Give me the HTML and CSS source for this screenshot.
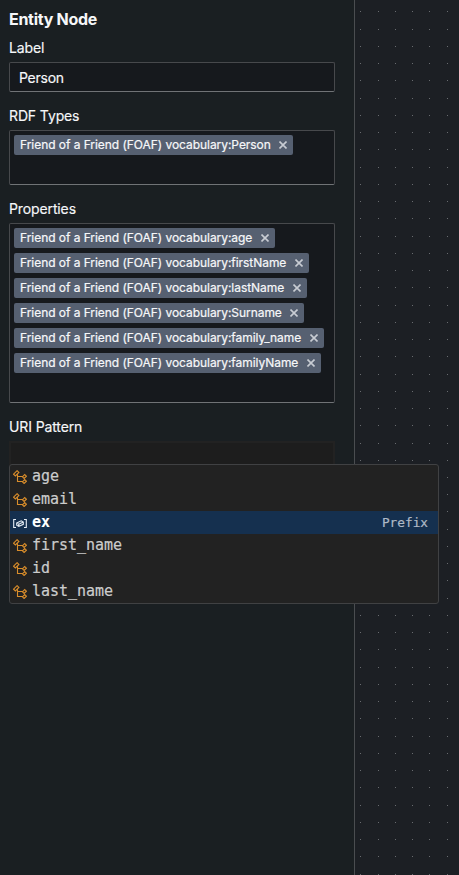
FILE: index.html
```html
<!DOCTYPE html>
<html lang="en">
<head>
<meta charset="utf-8">
<title>Entity Node</title>
<link rel="stylesheet" href="styles.css">
</head>
<body>
<svg class="defs" aria-hidden="true">
  <symbol id="tree" viewBox="0 0 14 14">
    <path d="M.6 4.2 4.1.7 5.9 2.5 2.4 6Z M4.5 4.4V11.5H9.6 M4.5 6.5H9.6 M9.4 6.8 11.7 4.5 13.4 6.2 11.1 8.5Z M9.4 11.8 11.7 9.5 13.4 11.2 11.1 13.5Z" />
  </symbol>
  <symbol id="variable" viewBox="0 0 14 14">
    <path d="M3 3.5H.7V11.5H3 M11 3.5H13.3V11.5H11 M3.7 7 8.2 4.8 10.3 6V8.3L5.8 10.5 3.7 9.3Z M3.7 7 5.8 8.2 10.3 6 M5.8 8.2V10.5" />
  </symbol>
  <symbol id="close" viewBox="0 0 8 8"><path d="M.5.5 7.5 7.5M7.5.5.5 7.5" /></symbol>
</svg>
<div class="app">
  <aside class="panel">
    <h1 class="title">Entity Node</h1>
    <label class="label label-first">Label</label>
    <div class="field text-field">Person</div>
    <label class="label">RDF Types</label>
    <div class="field tags types">
      <span class="tag">Friend of a Friend (FOAF) vocabulary:Person<svg><use href="#close"/></svg></span>
    </div>
    <label class="label">Properties</label>
    <div class="field tags properties">
      <span class="tag">Friend of a Friend (FOAF) vocabulary:age<svg><use href="#close"/></svg></span>
      <span class="tag">Friend of a Friend (FOAF) vocabulary:firstName<svg><use href="#close"/></svg></span>
      <span class="tag">Friend of a Friend (FOAF) vocabulary:lastName<svg><use href="#close"/></svg></span>
      <span class="tag">Friend of a Friend (FOAF) vocabulary:Surname<svg><use href="#close"/></svg></span>
      <span class="tag">Friend of a Friend (FOAF) vocabulary:family_name<svg><use href="#close"/></svg></span>
      <span class="tag">Friend of a Friend (FOAF) vocabulary:familyName<svg><use href="#close"/></svg></span>
    </div>
    <label class="label">URI Pattern</label>
    <div class="editor">
      <ul class="menu">
        <li class="option"><svg><use href="#tree"/></svg><span>age</span></li>
        <li class="option"><svg><use href="#tree"/></svg><span>email</span></li>
        <li class="option selected"><svg><use href="#variable"/></svg><span>ex</span><small>Prefix</small></li>
        <li class="option"><svg><use href="#tree"/></svg><span>first_name</span></li>
        <li class="option"><svg><use href="#tree"/></svg><span>id</span></li>
        <li class="option"><svg><use href="#tree"/></svg><span>last_name</span></li>
      </ul>
    </div>
  </aside>
  <main class="canvas"><svg class="dots"><path id="dots" /></svg></main>
</div>
<script src="dots.js"></script>
</body>
</html>
```

FILE: dots.js
```js
const pitch = 17.241;
let d = "";
for (let row = 0; row < 51; row++) {
  for (let col = 0; col < 6; col++) {
    const x = Math.round(5.49 + col * pitch);
    const y = Math.round(11.49 + row * pitch);
    d += `M${x} ${y}h1v1h-1z`;
  }
}
document.getElementById("dots").setAttribute("d", d);
```

FILE: styles.css
```css
* { box-sizing: border-box; }
body {
  margin: 0;
  background: #1c1f24;
  color: #f6f7f9;
  font: 14px/18px Inter, "Liberation Sans", sans-serif;
}
.defs { display: none; }
.app { display: flex; height: 875px; overflow: hidden; }
.panel {
  flex: 0 0 355px;
  padding: 9px 19px 0 9px;
  border-right: 1px solid #4a4d50;
  background: #1a1f22;
}
.title { margin: 0; font-size: 16px; line-height: 20px; font-weight: 700; letter-spacing: -.28px; }
.label { display: block; margin: 15px 0 5px; letter-spacing: -.12px; -webkit-text-stroke: .15px; }
.title + .label-first { margin-top: 10px; }
.field {
  border: 1px solid #47494c;
  border-bottom-color: #707376;
  border-radius: 2px;
  background: #16191d;
}
.text-field { height: 30px; padding: 0 9px; line-height: 29px; letter-spacing: -.25px; -webkit-text-stroke: .15px; }
.tags { display: flex; flex-direction: column; align-items: flex-start; gap: 5px; padding: 4px; }
.types { height: 55px; }
.properties { height: 180px; }
.tag {
  display: flex;
  align-items: center;
  height: 20px;
  padding: 0 6px;
  border-radius: 2px;
  background: #566071;
  font-size: 12px;
  letter-spacing: -.05px;
  white-space: nowrap;
  -webkit-text-stroke: .2px;
}
.tag svg { width: 8px; height: 8px; margin: 0 0 0 8.5px; fill: none; stroke: #c8ccd3; stroke-width: 1.6; }
.editor { position: relative; height: 30px; border: 2px solid #222; background: #1d1d1d; }
.menu {
  position: absolute;
  z-index: 1;
  top: 21px;
  left: -2px;
  width: 430px;
  margin: 0;
  padding: 0;
  list-style: none;
  border: 1px solid #404143;
  border-radius: 3px;
  background: #222;
  color: #ccc;
  font: 15px/23px "DejaVu Sans Mono", monospace;
}
.option { display: flex; height: 23px; padding: 0 10px 0 3px; }
.option span { letter-spacing: -.02px; -webkit-text-stroke: .2px; }
.option svg { width: 14px; height: 14px; margin: 5px 5px 0 0; fill: none; stroke: #d98d2b; stroke-width: 1.1; }
.selected { background: #15304f; color: #fff; }
.selected span { font-weight: 700; -webkit-text-stroke: 0; }
.selected svg { stroke: #e5edf5; }
.selected small { margin-left: auto; color: #aeb9c6; font-size: 12.75px; -webkit-text-stroke: .2px; }
.canvas { flex: 1; background: #1c1f24; }
.dots { display: block; width: 100%; height: 100%; fill: #696c70; shape-rendering: crispEdges; }
```
